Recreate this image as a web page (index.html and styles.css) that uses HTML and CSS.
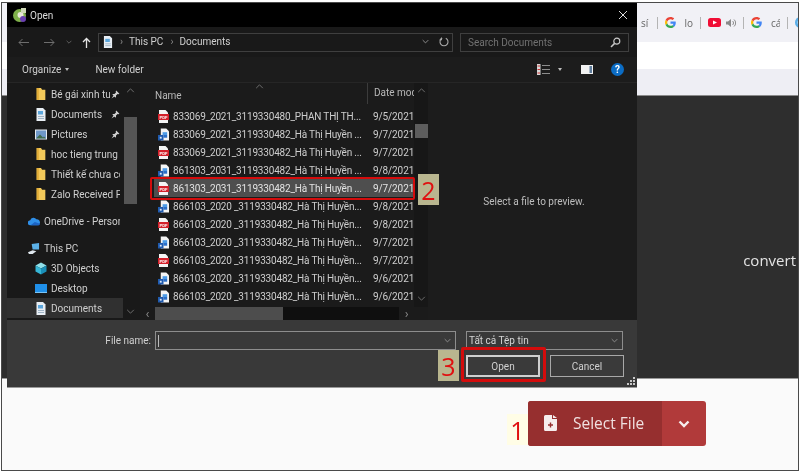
FILE: index.html
```html
<!DOCTYPE html>
<html lang="vi">
<head>
<meta charset="utf-8">
<title>Open</title>
<link rel="stylesheet" href="styles.css">
</head>
<body>
<svg class="defs" width="0" height="0" aria-hidden="true">
  <symbol id="pdf" viewBox="0 0 11 13"><path fill="#f4f4f4" d="M1 0h6.5L10 2.5V13H1z"/><rect y="4" width="11" height="6" fill="#d3202a"/><text x="5.5" y="8.6" font-size="4" font-family="Liberation Sans" font-weight="700" text-anchor="middle" fill="#fff">PDF</text></symbol>
  <symbol id="word" viewBox="0 0 12 13"><path fill="#f4f4f4" d="M3 0h6l3 3v10H3z"/><rect x="5" y="4" width="5" height="3" fill="#4c9be8"/><rect x="6" y="7" width="4" height="3" fill="#2a6fc9"/><rect y="7" width="6" height="6" fill="#1f5bb0"/><rect x="2" y="9" width="2" height="2" fill="#dfe9f7"/></symbol>
  <symbol id="folder" viewBox="0 0 10 12"><path fill="#f3c95a" d="M1 0h4l1 1.5h3V11H1z"/><path fill="#e2ad38" d="M1 0h2v11H1z"/></symbol>
  <symbol id="docs" viewBox="0 0 11 13"><path fill="#e8eef4" d="M1 0h6.5L10 2.5V13H1z"/><rect x="2.5" y="3" width="5" height="3.5" fill="#5ba6dc"/><path stroke="#9fb4c6" d="M2.5 8.5h6M2.5 10.5h6"/></symbol>
  <symbol id="pin" viewBox="0 0 9 9"><path fill="#cfcfcf" d="M5.2.6 8.4 3.8 7.6 4.3 6.6 4 5 5.6 5 7.2 4.4 7.6 1.4 4.6 1.8 4 3.4 4 5 2.4 4.7 1.4zM2.5 5.5 3.5 6.5 .5 8.5z"/></symbol>
  <symbol id="g" viewBox="0 0 48 48"><path fill="#EA4335" d="M24 9.5c3.54 0 6.71 1.22 9.21 3.6l6.85-6.85C35.9 2.38 30.47 0 24 0 14.62 0 6.51 5.38 2.56 13.22l7.98 6.19C12.43 13.72 17.74 9.5 24 9.5z"/><path fill="#4285F4" d="M46.98 24.55c0-1.57-.15-3.09-.38-4.55H24v9.02h12.94c-.58 2.96-2.26 5.48-4.78 7.18l7.73 6c4.51-4.18 7.09-10.36 7.09-17.65z"/><path fill="#FBBC05" d="M10.53 28.59c-.48-1.45-.76-2.99-.76-4.59s.27-3.14.76-4.59l-7.98-6.19C.92 16.46 0 20.12 0 24c0 3.88.92 7.54 2.56 10.78l7.97-6.19z"/><path fill="#34A853" d="M24 48c6.48 0 11.93-2.13 15.89-5.81l-7.73-6c-2.15 1.45-4.92 2.3-8.16 2.3-6.26 0-11.57-4.22-13.47-9.91l-7.98 6.19C6.51 42.62 14.62 48 24 48z"/></symbol>
  <symbol id="chev" viewBox="0 0 10 6"><path fill="none" stroke="currentColor" stroke-width="1.2" d="M1 1l4 4 4-4"/></symbol>
</svg>

<div class="screen">
  <div class="browser">
    <div class="bookmarks">
      <span class="bm-text">sí</span><i class="bm-sep"></i>
      <svg class="bm-g"><use href="#g"/></svg><span class="bm-text">lo</span><i class="bm-sep"></i>
      <svg class="bm-yt" viewBox="0 0 13 9"><rect width="13" height="9" rx="2.5" fill="#f00d35"/><path fill="#fff" d="M5 2.5 9 4.5 5 6.5z"/></svg>
      <svg class="bm-sound" viewBox="0 0 10 10"><path fill="#8a8a8a" d="M0 3.5h2L5 1v8L2 6.500H0z"/><path fill="none" stroke="#8a8a8a" d="M6.500 3a2.500 2.500 0 0 1 0 4M8 1.500a4.500 4.500 0 0 1 0 7"/></svg><i class="bm-sep"></i>
      <svg class="bm-g"><use href="#g"/></svg><span class="bm-text">cá</span><i class="bm-sep"></i>
      <svg class="bm-globe" viewBox="0 0 11 11"><circle cx="5.500" cy="5.500" r="5.500" fill="#5aaee8"/><circle cx="5.500" cy="5.500" r="3" fill="#cfe6f7"/></svg>
    </div>
    <div class="omnibar"></div>
    <div class="strip"></div>
    <div class="hero"><span class="hero-text">convert</span></div>
    <div class="lower">
      <button class="select-btn">
        <span class="select-main">
          <svg class="file-plus" viewBox="0 0 13 16"><path fill="#f6eded" d="M0 1.500A1.500 1.500 0 0 1 1.500 0H8v4h5v10.500a1.500 1.500 0 0 1-1.500 1.500h-10A1.500 1.500 0 0 1 0 14.500z"/><path fill="#f6eded" d="M9 0l4 3H9z"/><path stroke="#962f2f" stroke-width="1.400" d="M6.500 7.500v5M4 10h5"/></svg>
          Select File
        </span>
        <span class="select-arrow"><svg class="select-chev" viewBox="0 0 12 8"><path fill="none" stroke="#f6eded" stroke-width="2.400" d="M1.500 1.500 6 6l4.500-4.500"/></svg></span>
      </button>
    </div>
  </div>

  <section class="dialog">
    <header class="titlebar">
      <svg class="app-icon" viewBox="0 0 14 14"><circle cx="6.500" cy="7.500" r="6.500" fill="#7fb04a"/><circle cx="7.500" cy="7" r="3" fill="#e8e8d8"/><rect x="8" y="0" width="5" height="5" fill="#cfd8b8"/><circle cx="10" cy="11" r="3" fill="#6a3fb0"/></svg>
      <span class="title">Open</span>
      <svg class="close" viewBox="0 0 10 10"><path stroke="#dcdcdc" stroke-width="1" d="M1 1l8 8M9 1l-8 8"/></svg>
    </header>

    <div class="navbar">
      <svg class="nav-arrow back" viewBox="0 0 11 9"><path fill="none" stroke="#6e6e6e" d="M11 4.500H1M4.500 1 1 4.500 4.500 8"/></svg>
      <svg class="nav-arrow fwd" viewBox="0 0 11 9"><path fill="none" stroke="#6e6e6e" d="M0 4.500h10M6.500 1 10 4.500 6.500 8"/></svg>
      <svg class="nav-small" viewBox="0 0 6 4"><use href="#chev"/></svg>
      <svg class="nav-up" viewBox="0 0 9 11"><path fill="none" stroke="#e4e4e4" stroke-width="1.300" d="M4.500 11V1.500M1 5l3.500-3.500L8 5"/></svg>
      <div class="address">
        <svg class="addr-doc"><use href="#docs"/></svg>
        <span class="crumb-sep">›</span><span class="crumb">This PC</span>
        <span class="crumb-sep second">›</span><span class="crumb">Documents</span>
        <svg class="addr-chev"><use href="#chev"/></svg>
        <svg class="addr-refresh" viewBox="0 0 10 10"><path fill="none" stroke="#a8a8a8" stroke-width="1.100" d="M6.800 1.200a4 4 0 1 1-3.600 0"/><path fill="#a8a8a8" d="M3 0v3.200H0z"/></svg>
      </div>
      <div class="search">
        <span class="search-text">Search Documents</span>
        <svg class="search-icon" viewBox="0 0 11 11"><circle cx="6.800" cy="4.200" r="3" fill="none" stroke="#c8c8c8" stroke-width="1.200"/><path stroke="#c8c8c8" stroke-width="1.500" d="M4.600 6.400 1 10"/></svg>
      </div>
    </div>

    <div class="toolbar">
      <span class="tool">Organize</span><i class="caret"></i>
      <span class="tool new-folder">New folder</span>
      <span class="tool-spacer"></span>
      <svg class="view-icon" viewBox="0 0 13 11"><rect x="0" y="0" width="3.500" height="11" fill="#d8d8d8"/><path stroke="#c33" d="M.5 2h2.500M.5 5.500h2.500M.5 9h2.500"/><path stroke="#8d8d8d" d="M5 1.500h8M5 5.500h8M5 9.500h8"/></svg>
      <i class="caret view-caret"></i>
      <svg class="pane-icon" viewBox="0 0 12 9"><rect width="12" height="9" fill="#f2f2f2"/><rect x="8.500" y="1" width="2.500" height="7" fill="#5f7d9c"/></svg>
      <span class="help">?</span>
    </div>

    <div class="content">
      <nav class="sidebar">
        <ul class="tree">
          <li class="tree-item"><svg class="tree-icon"><use href="#folder"/></svg><span class="tree-label">Bé gái xinh tuổi</span><svg class="pin"><use href="#pin"/></svg></li>
          <li class="tree-item"><svg class="tree-icon"><use href="#docs"/></svg><span class="tree-label">Documents</span><svg class="pin"><use href="#pin"/></svg></li>
          <li class="tree-item"><svg class="tree-icon" viewBox="0 0 12 10"><rect width="12" height="10" fill="#e6eaef"/><rect x="1" y="1" width="10" height="8" fill="#6f98c9"/><path fill="#3f6b4b" d="M1 9 5 5l3 3 1-1 2 2z"/></svg><span class="tree-label">Pictures</span><svg class="pin"><use href="#pin"/></svg></li>
          <li class="tree-item"><svg class="tree-icon"><use href="#folder"/></svg><span class="tree-label">hoc tieng trung</span></li>
          <li class="tree-item"><svg class="tree-icon"><use href="#folder"/></svg><span class="tree-label">Thiết kế chưa có tên</span></li>
          <li class="tree-item"><svg class="tree-icon"><use href="#folder"/></svg><span class="tree-label">Zalo Received Files</span></li>
          <li class="tree-item top spaced"><svg class="tree-icon" viewBox="0 0 14 9"><path fill="#2f8fe8" d="M3 9a3 3 0 0 1-.4-6A4 4 0 0 1 9.800 2 3.500 3.500 0 0 1 11 9z"/><path fill="#1c63c4" d="M3 9l5-4 6 2a2.500 2.500 0 0 1-3 2z"/></svg><span class="tree-label">OneDrive - Personal</span></li>
          <li class="tree-item top spaced"><svg class="tree-icon" viewBox="0 0 13 12"><path fill="#5bb1e8" d="M4 1l8-1v7H5z"/><path fill="#dfe7ee" d="M0 10l5-2 4 1-4 3H1z"/></svg><span class="tree-label">This PC</span></li>
          <li class="tree-item"><svg class="tree-icon" viewBox="0 0 12 12"><path fill="#8fe0ea" d="M6 0l5.500 3L6 6 .5 3z"/><path fill="#36b6d6" d="M.5 3 6 6v6L.5 9z"/><path fill="#1a8fb8" d="M11.500 3 6 6v6l5.500-3z"/></svg><span class="tree-label">3D Objects</span></li>
          <li class="tree-item"><svg class="tree-icon" viewBox="0 0 12 9"><rect width="12" height="8" fill="#1f8fe8"/><rect y="8" width="12" height="1" fill="#7cc4f4"/></svg><span class="tree-label">Desktop</span></li>
          <li class="tree-item active"><svg class="tree-icon"><use href="#docs"/></svg><span class="tree-label">Documents</span></li>
        </ul>
        <div class="side-scroll">
          <svg class="sb-up"><use href="#chev"/></svg>
          <div class="side-thumb"></div>
          <svg class="sb-down"><use href="#chev"/></svg>
        </div>
      </nav>

      <div class="files">
        <div class="files-main">
          <div class="files-list">
            <div class="list-head">
              <span class="col-name">Name</span>
              <svg class="sort"><use href="#chev"/></svg>
              <span class="col-date">Date modified</span>
            </div>
            <div class="row"><svg class="row-icon"><use href="#pdf"/></svg><span class="row-name">833069_2021_3119330480_PHAN THỊ TH...</span><span class="row-date">9/5/2021</span></div>
            <div class="row"><svg class="row-icon"><use href="#word"/></svg><span class="row-name">833069_2021_3119330482_Hà Thị Huyền ...</span><span class="row-date">9/7/2021</span></div>
            <div class="row"><svg class="row-icon"><use href="#pdf"/></svg><span class="row-name">833069_2021_3119330482_Hà Thị Huyền ...</span><span class="row-date">9/7/2021</span></div>
            <div class="row"><svg class="row-icon"><use href="#word"/></svg><span class="row-name">861303_2031_3119330482_Hà Thị Huyền ...</span><span class="row-date">9/8/2021</span></div>
            <div class="row selected"><svg class="row-icon"><use href="#pdf"/></svg><span class="row-name">861303_2031_3119330482_Hà Thị Huyền ...</span><span class="row-date">9/7/2021</span></div>
            <div class="row"><svg class="row-icon"><use href="#word"/></svg><span class="row-name">866103_2020 _3119330482_Hà Thị Huyền...</span><span class="row-date">9/8/2021</span></div>
            <div class="row"><svg class="row-icon"><use href="#pdf"/></svg><span class="row-name">866103_2020 _3119330482_Hà Thị Huyền...</span><span class="row-date">9/8/2021</span></div>
            <div class="row"><svg class="row-icon"><use href="#word"/></svg><span class="row-name">866103_2020 _3119330482_Hà Thị Huyền...</span><span class="row-date">9/7/2021</span></div>
            <div class="row"><svg class="row-icon"><use href="#pdf"/></svg><span class="row-name">866103_2020 _3119330482_Hà Thị Huyền...</span><span class="row-date">9/7/2021</span></div>
            <div class="row"><svg class="row-icon"><use href="#word"/></svg><span class="row-name">866103_2020 _3119330482_Hà Thị Huyền...</span><span class="row-date">9/6/2021</span></div>
            <div class="row"><svg class="row-icon"><use href="#word"/></svg><span class="row-name">866103_2020 _3119330482_Hà Thị Huyền...</span><span class="row-date">9/6/2021</span></div>
          </div>
          <div class="list-scroll">
            <svg class="sb-up"><use href="#chev"/></svg>
            <div class="list-thumb"></div>
            <svg class="sb-down"><use href="#chev"/></svg>
          </div>
        </div>
        <div class="hscroll">
          <span class="h-arrow">‹</span>
          <div class="h-track"><div class="h-thumb"></div></div>
          <span class="h-arrow">›</span>
        </div>
      </div>

      <aside class="preview">Select a file to preview.</aside>
    </div>

    <footer class="footer">
      <div class="name-row">
        <label class="name-label">File name:</label>
        <div class="name-input"><i class="cursor"></i><svg class="field-chev"><use href="#chev"/></svg></div>
        <div class="type-select"><span>Tất cả Tệp tin</span><svg class="field-chev"><use href="#chev"/></svg></div>
      </div>
      <div class="btn-row">
        <button class="dlg-btn primary">Open</button>
        <button class="dlg-btn">Cancel</button>
      </div>
      <svg class="grip" viewBox="0 0 8 8"><path fill="#c8c8c8" d="M6 0h2v2H6zM3 3h2v2H3zM6 3h2v2H6zM0 6h2v2H0zM3 6h2v2H3zM6 6h2v2H6z"/></svg>
    </footer>
  </section>

  <div class="mark-row"></div>
  <div class="mark-open"></div>
  <span class="badge badge-1">1</span>
  <span class="badge badge-2">2</span>
  <span class="badge badge-3">3</span>
</div>
</body>
</html>
```

FILE: styles.css
```css
* { box-sizing: border-box; }
html, body { margin: 0; padding: 0; background: #fff; }
.defs { position: absolute; }
ul { list-style: none; margin: 0; padding: 0; }
i { display: block; font-style: normal; }
svg { display: block; flex: none; }

.screen {
  position: relative;
  width: 800px;
  height: 472px;
  overflow: hidden;
  font-family: "Open Sans", "Noto Sans", sans-serif;
  filter: blur(.35px);
}

/* Browser behind the dialog */
.browser {
  display: flex;
  flex-direction: column;
  width: 798px;
  height: 469px;
  margin: 2px 0 0 1px;
  border: 1px solid #4a4a4a;
}
.bookmarks {
  display: flex;
  align-items: center;
  height: 39px;
  padding: 0 0 0 639px;
  background: #f1f1f6;
  overflow: hidden;
}
.bm-text { flex: none; width: 8.5px; font-size: 10px; color: #666; white-space: nowrap; overflow: hidden; }
.bm-sep { flex: none; width: 1px; height: 12px; margin: 0 7px; background: #b4b4b4; }
.bm-g { width: 11px; height: 11px; margin-right: 9px; }
.bm-yt { width: 13px; height: 9px; margin-right: 5px; }
.bm-sound { width: 10px; height: 10px; }
.bm-globe { width: 11px; height: 11px; }
.omnibar { height: 27px; background: #fff; }
.strip { height: 27px; background: #eeeef4; border-bottom: 1px solid #8a8a8a; }
.hero {
  display: flex;
  align-items: center;
  justify-content: flex-end;
  height: 282px;
  padding: 46px 2px 0 0;
  background: #2e2e2e;
}
.hero-text { font-size: 15px; color: #e4e4e4; }
.lower { flex: 1; padding: 22px 0 0 526px; background: #fafafa; border-top: 1px solid #999; }

.select-btn {
  display: flex;
  width: 178px;
  height: 45px;
  padding: 0;
  border: 0;
  border-radius: 3px;
  overflow: hidden;
  font: inherit;
  background: #b13a3a;
}
.select-main {
  display: flex;
  align-items: center;
  gap: 16px;
  width: 134px;
  height: 100%;
  padding: 0 0 2px 16px;
  background: #962f2f;
  font-size: 15.5px;
  color: #f0e0e0;
}
.file-plus { width: 13px; height: 16px; }
.select-arrow { display: flex; flex: 1; align-items: center; justify-content: center; }
.select-chev { width: 12px; height: 8px; }

/* Dialog window */
.dialog {
  position: absolute;
  left: 7px;
  top: 3px;
  display: flex;
  flex-direction: column;
  width: 630px;
  height: 385px;
  font-family: Roboto, "Open Sans", sans-serif;
  font-size: 10px;
  color: #cfcfcf;
  background: #1b1b1b;
}
.titlebar {
  display: flex;
  align-items: center;
  height: 24px;
  padding: 0 9px 0 6px;
  background: #000;
}
.app-icon { width: 14px; height: 14px; margin-right: 3px; }
.title { flex: 1; color: #dcdcdc; }
.close { width: 10px; height: 10px; }

.navbar {
  display: flex;
  align-items: center;
  height: 30px;
  padding-left: 11px;
  background: #191919;
}
.nav-arrow { width: 11px; height: 9px; }
.fwd { margin-left: 15px; }
.nav-small { width: 6px; height: 4px; margin-left: 11px; color: #777; }
.nav-up { width: 9px; height: 11px; margin-left: 10px; }
.address {
  display: flex;
  align-items: center;
  width: 355px;
  height: 19px;
  margin-left: 7px;
  padding: 0 0 1px 4px;
  border: 1px solid #3f3f3f;
}
.addr-doc { width: 10px; height: 12px; }
.crumb-sep { margin: 0 6px 0 7px; color: #8a8a8a; }
.crumb-sep.second { margin: 0 6px 0 7px; }
.crumb { color: #cfcfcf; }
.addr-chev { width: 7px; height: 5px; margin-left: auto; color: #a0a0a0; }
.addr-refresh { width: 10px; height: 10px; margin: 0 3px 0 10px; }
.search {
  display: flex;
  align-items: center;
  justify-content: space-between;
  width: 169px;
  height: 19px;
  margin-left: 7px;
  padding: 0 7px;
  border: 1px solid #3f3f3f;
  color: #717171;
}
.search-icon { width: 11px; height: 11px; }

.toolbar {
  display: flex;
  align-items: center;
  height: 25px;
  padding: 0 13px 0 15px;
  background: #1c1c1c;
}
.caret { width: 0; height: 0; margin-left: 4px; border: 2.5px solid transparent; border-top: 3px solid #bdbdbd; border-bottom: 0; }
.new-folder { margin-left: 26px; }
.tool-spacer { flex: 1; }
.view-icon { width: 13px; height: 11px; }
.view-caret { margin-left: 8px; }
.pane-icon { width: 12px; height: 9px; margin-left: 19px; }
.help {
  width: 13px;
  height: 13px;
  margin-left: 18px;
  border-radius: 50%;
  background: #0b6cc4;
  color: #fff;
  font-size: 10px;
  font-weight: 700;
  line-height: 13px;
  text-align: center;
}

.content { display: flex; height: 238px; border-top: 1px solid #262626; }
.sidebar { display: flex; width: 133px; background: #191919; }
.tree { width: 116px; padding-top: 1px; overflow: hidden; }
.tree-item { display: flex; align-items: center; height: 20px; padding: 0 3px 0 28px; }
.tree-item.top { padding-left: 21px; }
.tree-item.spaced { margin-top: 7px; }
.tree-item.active { background: #303030; }
.tree-icon { width: 12px; height: 13px; margin-right: 4px; }
.tree-label { flex: 1; white-space: nowrap; overflow: hidden; }
.pin { width: 9px; height: 9px; margin-left: 1px; }
.side-scroll { display: flex; flex-direction: column; width: 13px; margin-left: 1px; }
.sb-up, .sb-down { width: 9px; height: 5px; margin: 5px auto; color: #6d6d6d; }
.sb-up { transform: scaleY(-1); }
.side-thumb { width: 13px; height: 87px; margin-top: 19px; background: #555; }
.sb-down { margin-top: auto; margin-bottom: 6px; }

.files { display: flex; flex-direction: column; width: 288px; margin-left: 0; background: #1b1b1b; }
.files-main { display: flex; height: 224px; }
.files-list { width: 274px; overflow: hidden; }
.list-head {
  position: relative;
  display: flex;
  align-items: center;
  height: 24px;
  padding: 0 0 0 15px;
}
.col-name { width: 212px; color: #b8b8b8; }
.sort { position: absolute; left: 115px; top: 1px; width: 9px; height: 5px; color: #6d6d6d; transform: scaleY(-1); }
.col-date { height: 21px; margin-top: -3px; padding: 4px 0 0 6px; border-left: 1px solid #3c3c3c; color: #b8b8b8; white-space: nowrap; width: 47px; overflow: hidden; }
.row { display: flex; align-items: center; height: 18.1px; margin-left: 14px; width: 259px; padding-left: 4px; overflow: hidden; color: #cdcdcd; }
.row.selected { background: #4e4e4e; color: #e2e2e2; }
.row-icon { width: 11px; height: 13px; margin-right: 4px; }
.row-name { flex: none; width: 200px; white-space: nowrap; overflow: hidden; letter-spacing: -.18px; }
.row-date { flex: none; white-space: nowrap; letter-spacing: -.1px; }
.list-scroll { display: flex; flex-direction: column; width: 14px; background: #171717; }
.list-thumb { width: 13px; height: 14px; margin: 26px 0 0 1px; background: #5d5d5d; }

.hscroll { display: flex; align-items: center; height: 13px; width: 274px; background: #1b1b1b; color: #8a8a8a; }
.h-arrow { width: 15px; text-align: center; font-size: 13px; line-height: 13px; }
.h-track { width: 247px; height: 13px; background: #0f0f0f; }
.h-thumb { width: 128px; height: 13px; background: #4d4d4d; }

.preview {
  display: flex;
  align-items: center;
  justify-content: center;
  flex: 1;
  padding-left: 3px;
  background: #1c1c1c;
  color: #bdbdbd;
}

.footer {
  position: relative;
  flex: 1;
  padding-top: 11px;
  background: #393939;
  border-bottom: 1px solid #9a9a9a;
}
.name-row { display: flex; align-items: center; height: 19px; }
.name-label { width: 144px; margin-right: 4px; text-align: right; color: #cfcfcf; }
.name-input, .type-select {
  display: flex;
  align-items: center;
  justify-content: space-between;
  height: 19px;
  padding: 0 4px 0 2px;
  border: 1px solid #8d8d8d;
  color: #d4d4d4;
}
.name-input { width: 301px; }
.type-select { width: 157px; margin-left: 10px; }
.cursor { width: 1px; height: 12px; background: #bbb; }
.field-chev { width: 7px; height: 5px; color: #9a9a9a; }
.btn-row { display: flex; gap: 10px; margin: 5px 0 0 459px; }
.dlg-btn {
  width: 74px;
  height: 22px;
  padding: 0;
  border: 1px solid #a8a8a8;
  background: #3a3a3a;
  color: #d0d0d0;
  font: inherit;
}
.dlg-btn.primary { border: 2px solid #cfcfcf; }
.grip { position: absolute; right: 2px; bottom: 2px; width: 8px; height: 8px; }

/* Tutorial annotations over the screenshot */
.mark-row, .mark-open { position: absolute; border: 2px solid #d40c0c; border-radius: 2px; }
.mark-row { left: 150px; top: 177px; width: 265px; height: 23px; }
.mark-open { left: 461px; top: 347px; width: 85px; height: 35px; border-width: 3px; }
.badge {
  position: absolute;
  display: flex;
  align-items: center;
  justify-content: center;
  width: 21px;
  height: 31px;
  font-size: 25px;
  color: #e01010;
  font-family: "Open Sans", sans-serif;
}
.badge-1 { left: 507px; top: 414px; background: #fffde6; }
.badge-2 { left: 418px; top: 174px; background: #b9b68f; }
.badge-3 { left: 438px; top: 350px; background: #b9b68f; }
```
